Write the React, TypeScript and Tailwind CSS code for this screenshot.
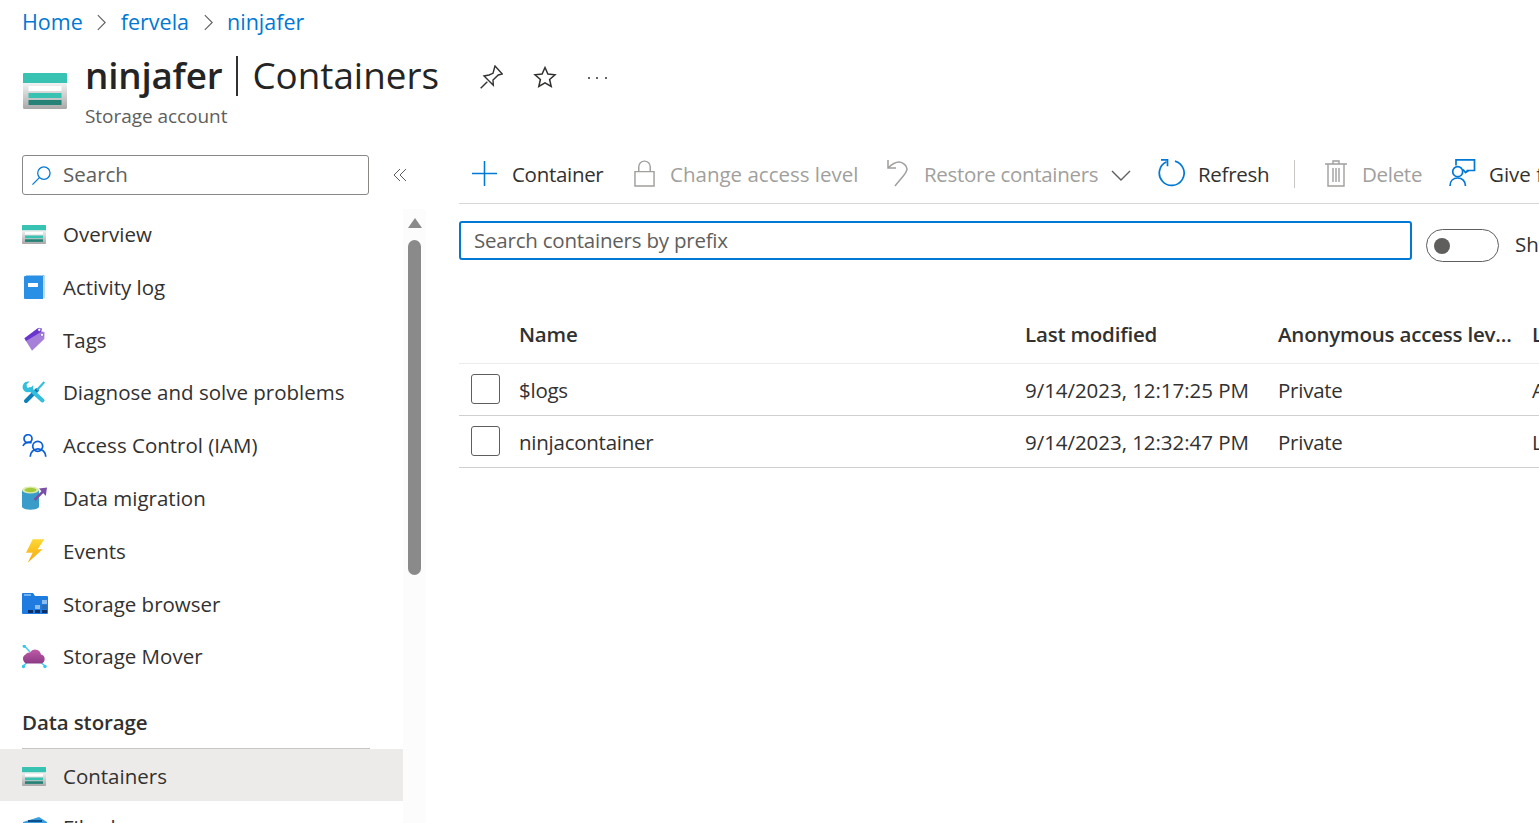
import React from 'react';

const font = 'font-["Open_Sans","Noto_Sans",sans-serif]';

const StorageIcon = ({ className }: { className: string }) => (
    <svg viewBox="0 0 44 36" className={className} preserveAspectRatio="none">
        <defs>
            <linearGradient id="storageBody" x1="0" y1="0" x2="0" y2="1">
                <stop offset="0" stopColor="#f2f2f2" />
                <stop offset="1" stopColor="#a8a8a8" />
            </linearGradient>
        </defs>
        <path d="M0 10h44v24.500a1.500 1.500 0 0 1-1.500 1.500h-41A1.500 1.500 0 0 1 0 34.500z" fill="url(#storageBody)" />
        <path d="M1 0h42a1 1 0 0 1 1 1v9H0V1a1 1 0 0 1 1-1z" fill="#37c2b1" />
        <rect x="5.500" y="13" width="33" height="5" fill="#ffffff" />
        <rect x="5.500" y="20" width="33" height="5" fill="#37c2b1" />
        <rect x="5.500" y="27" width="33" height="5" fill="#258277" />
    </svg>
);

const ActivityIcon = () => (
    <svg viewBox="0 0 23 24" className="w-[23px] h-[24px]">
        <path d="M4 .3h18v23" fill="none" stroke="#7ab8ea" strokeWidth="1" />
        <path d="M3 1h18v23H3a1 1 0 0 1-1-1V2a1 1 0 0 1 1-1z" fill="#2a90e6" />
        <rect x="6" y="8" width="10" height="4" fill="#ffffff" />
    </svg>
);

const TagsIcon = () => (
    <svg viewBox="0 0 24 25" className="w-[24px] h-[25px]">
        <path d="M3 12.500 17 4l5.500 1-.2 7L10 23.800z" fill="#a67fd8" />
        <path d="M2.300 11.200 15.700 1.200 20 1.500 19 5 4 14z" fill="#6a35cf" />
        <circle cx="17.300" cy="2.800" r="1.500" fill="#ffffff" stroke="#5c2fb5" strokeWidth="0.500" />
        <circle cx="20" cy="7.800" r="1.600" fill="#ffffff" stroke="#5c2fb5" strokeWidth="0.500" />
    </svg>
);

const DiagnoseIcon = () => (
    <svg viewBox="0 0 24 24" className="w-[24px] h-[24px]">
        <path d="M15 9 4 20" stroke="#0f7fb8" strokeWidth="4" strokeLinecap="round" />
        <path d="M15 9 22.300 1" stroke="#32bedd" strokeWidth="2" />
        <path d="M8 8 20.500 19.500" stroke="#32bedd" strokeWidth="4" strokeLinecap="round" />
        <path d="M7.500 .6 4.500 3.600l.6 3 3 .6 3-3A5.500 5.500 0 0 1 4 11 5.500 5.500 0 0 1 7.500 .6z" fill="#32bedd" />
    </svg>
);

const AccessIcon = () => (
    <svg viewBox="0 0 25 24" className="w-[25px] h-[24px]" fill="none" stroke="#0a5fd6" strokeWidth="1.700">
        <circle cx="6" cy="4.700" r="4" />
        <path d="M1 12A6 6 0 0 1 9.500 9" />
        <circle cx="15.700" cy="12.300" r="5" />
        <path d="M8.200 22.700a7.800 7.800 0 0 1 15.600 0" />
    </svg>
);

const MigrationIcon = () => (
    <svg viewBox="0 0 26 24" className="w-[26px] h-[24px]">
        <path d="M0 4v16.500c0 1.800 3.500 3.200 8.500 3.200s8.500-1.400 8.500-3.200V4z" fill="#3a9cc8" />
        <ellipse cx="8.500" cy="4" rx="8.500" ry="3.500" fill="#dcecae" />
        <ellipse cx="8.500" cy="4" rx="6" ry="2.200" fill="#a4c93a" />
        <path d="M12.500 14 21 5.500" stroke="#7a4fa8" strokeWidth="2.500" />
        <path d="M17 2.500l8-1-1.200 8.500z" fill="#7a4fa8" />
    </svg>
);

const EventsIcon = () => (
    <svg viewBox="0 0 20 25" className="w-[20px] h-[25px] ml-[3px]">
        <defs>
            <linearGradient id="boltFill" x1="0" y1="0" x2="0" y2="1">
                <stop offset="0" stopColor="#fdd835" />
                <stop offset="1" stopColor="#f5a70c" />
            </linearGradient>
        </defs>
        <path d="M7.700.3h11.600l-6.600 10h5L2.700 23.700l5-10H1z" fill="url(#boltFill)" />
    </svg>
);

const BrowserIcon = () => (
    <svg viewBox="0 0 26 21" className="w-[26px] h-[21px]">
        <path d="M0 1a1 1 0 0 1 1-1h10l2 3h12a1 1 0 0 1 1 1v16a1 1 0 0 1-1 1H1a1 1 0 0 1-1-1z" fill="#1e7be0" />
        <rect x="2" y="1" width="7" height="2" fill="#6fb4f0" />
        <path d="M6 17h5v3H6zM13 17h5v3h-5zM20 17h5v3h-5z" fill="#0d2f66" />
        <path d="M13 12h5v4h-5z" fill="#8cbcf0" />
        <path d="M20 12h5v4h-5z" fill="#2b6cb8" />
        <path d="M20 7h5v4h-5z" fill="#8cbcf0" />
    </svg>
);

const MoverIcon = () => (
    <svg viewBox="0 0 26 24" className="w-[26px] h-[24px]">
        <defs>
            <linearGradient id="cloudFill" x1="0" y1="0" x2="0" y2="1">
                <stop offset="0" stopColor="#c05aa6" />
                <stop offset="1" stopColor="#8c3a85" />
            </linearGradient>
        </defs>
        <path d="M2.500 1 8 7M1 21l6-5M23 21l-6-5" stroke="#38c8ee" strokeWidth="1.300" />
        <circle cx="2.300" cy="1.200" r="1.700" fill="#38c8ee" />
        <circle cx="1.500" cy="21.500" r="1.700" fill="#38c8ee" />
        <circle cx="23" cy="21.500" r="1.700" fill="#38c8ee" />
        <path d="M5.500 18.500A4.800 4.800 0 0 1 3.500 9.500 4.500 4.500 0 0 1 8 7.500 6 6 0 0 1 19 9.500a4.600 4.600 0 0 1 0 9z" fill="url(#cloudFill)" />
    </svg>
);

const FileSharesIcon = () => (
    <svg viewBox="0 0 26 24" className="w-[26px] h-[24px]">
        <path d="M1 6 17 1l8 5v16H1z" fill="#3a9fdc" />
        <path d="M6 5h14" stroke="#0d4f8c" strokeWidth="2" />
    </svg>
);

const navItems: { label: string; icon: React.ReactNode }[] = [
    { label: 'Overview', icon: <StorageIcon className="w-[24px] h-[19px]" /> },
    { label: 'Activity log', icon: <ActivityIcon /> },
    { label: 'Tags', icon: <TagsIcon /> },
    { label: 'Diagnose and solve problems', icon: <DiagnoseIcon /> },
    { label: 'Access Control (IAM)', icon: <AccessIcon /> },
    { label: 'Data migration', icon: <MigrationIcon /> },
    { label: 'Events', icon: <EventsIcon /> },
    { label: 'Storage browser', icon: <BrowserIcon /> },
    { label: 'Storage Mover', icon: <MoverIcon /> },
];

const NavRow = ({ label, icon, active }: { label: string; icon: React.ReactNode; active?: boolean }) => (
    <div className={`shrink-0 flex items-center pl-[22px] ${active ? 'h-[52px] pt-[2px] bg-[#edebe9]' : 'h-[52.800px]'}`}>
        <span className="w-[41px] shrink-0 flex items-center">{icon}</span>
        <span className="text-[20.500px] text-[#323130] whitespace-nowrap">{label}</span>
    </div>
);

const Chevron = () => (
    <svg viewBox="0 0 12 20" className="w-[11px] h-[19px] mx-[13.500px]" fill="none" stroke="#605e5c" strokeWidth="1.200">
        <path d="M2 2l8 8-8 8" />
    </svg>
);

const ToolbarButton = ({ icon, label, disabled, tight, width }: { icon: React.ReactNode; label: string; disabled?: boolean; tight?: boolean; width: string }) => (
    <div className={`flex items-center h-[38px] shrink-0 ${width}`}>
        <span className="flex mb-[2px]">{icon}</span>
        <span className={`text-[20.500px] whitespace-nowrap ${tight ? 'tracking-[-0.3px]' : ''} ${disabled ? 'text-[#a19f9d]' : 'text-[#323130]'}`}>{label}</span>
    </div>
);

const TableRow = ({ name, modified, access, lease }: { name: string; modified: string; access: string; lease: string }) => (
    <div className="h-[52px] pt-[2px] flex items-center border-b border-[#d0cfce] text-[20.500px] text-[#323130] whitespace-nowrap">
        <span className="w-[60px] shrink-0 pl-[12px] mb-[4px]">
            <span className="block w-[29px] h-[30px] border border-[#605e5c] rounded-[3px]" />
        </span>
        <span className="w-[506px] shrink-0 tracking-[-0.25px]">{name}</span>
        <span className="w-[253px] shrink-0 tracking-[-0.05px]">{modified}</span>
        <span className="w-[254px] shrink-0 tracking-[-0.25px]">{access}</span>
        <span>{lease}</span>
    </div>
);

export default function App() {
    return (
        <div className={`w-[1539px] h-[823px] overflow-hidden bg-white ${font}`}>
            {/* breadcrumb */}
            <div className="h-[44px] pt-[1px] flex items-center pl-[22px] text-[21.500px] text-[#0078d4]">
                <span>Home</span>
                <Chevron />
                <span>fervela</span>
                <Chevron />
                <span>ninjafer</span>
            </div>
            {/* title */}
            <div className="h-[111px] flex pl-[23px]">
                <StorageIcon className="w-[44px] h-[36px] mt-[29px] mr-[18px]" />
                <div className="flex flex-col">
                    <div className="flex items-center h-[64px] text-[36.800px] text-[#242424] whitespace-nowrap">
                        <span className="font-semibold -tracking-[0.2px]">ninjafer</span>
                        <span className="mx-[14px] w-[2px] h-[40px] bg-[#323130]" />
                        <span>Containers</span>
                        <svg viewBox="0 0 24 24" className="w-[24px] h-[24px] ml-[40px] mt-[2px]" fill="none" stroke="#323130" strokeWidth="1.400">
                            <path d="M16 1 23.300 9 19.300 10 14 15l.3 5.300L5 11l5-1 4-1.700z" />
                            <path d="M8.300 16.700 1.700 23.300" />
                        </svg>
                        <svg viewBox="0 0 24 24" className="w-[24px] h-[24px] ml-[30px] mt-[2px]" fill="none" stroke="#323130" strokeWidth="1.500">
                            <path d="M12 2.500l2.900 6.600 7.100.7-5.400 4.700 1.600 7-6.200-3.700-6.200 3.700 1.600-7L2 9.800l7.100-.7z" />
                        </svg>
                        <span className="ml-[31px] mt-[4px] w-[19px] flex justify-between">
                            <span className="w-[2px] h-[2px] bg-[#323130] rounded-full" />
                            <span className="w-[2px] h-[2px] bg-[#323130] rounded-full" />
                            <span className="w-[2px] h-[2px] bg-[#323130] rounded-full" />
                        </span>
                    </div>
                    <div className="text-[19px] text-[#605e5c] leading-[26px] -mt-[5px] tracking-[-0.05px]">Storage account</div>
                </div>
            </div>
            <div className="flex h-[668px]">
                {/* sidebar */}
                <div className="w-[403px] shrink-0">
                    <div className="flex items-center pl-[22px] h-[40px]">
                        <div className="w-[347px] h-[40px] shrink-0 border border-[#8a8886] rounded-[3px] flex items-center pl-[8px]">
                            <svg viewBox="0 0 22 22" className="w-[21px] h-[21px] mr-[11px]" fill="none" stroke="#0078d4" strokeWidth="1.300">
                                <circle cx="13.500" cy="8.500" r="6.500" />
                                <path d="M8.800 13.200 1.500 20.500" />
                            </svg>
                            <span className="text-[20.500px] text-[#605e5c] mb-[1px]">Search</span>
                        </div>
                        <svg viewBox="0 0 14 14" className="w-[14px] h-[14px] ml-[24px] shrink-0" fill="none" stroke="#605e5c" strokeWidth="1">
                            <path d="M7 1 1 7l6 6M13 1 7 7l6 6" />
                        </svg>
                    </div>
                    <div className="mt-[13px]">
                        {navItems.map((item) => (
                            <NavRow key={item.label} label={item.label} icon={item.icon} />
                        ))}
                    </div>
                    <div className="h-[65px] pl-[22px] flex items-end pb-[16px] text-[20.500px] font-semibold text-[#323130] leading-none tracking-[-0.1px]">
                        Data storage
                    </div>
                    <div className="ml-[22px] w-[348px] h-px bg-[#c8c6c4]" />
                    <NavRow label="Containers" icon={<StorageIcon className="w-[24px] h-[19px]" />} active />
                    <NavRow label="File shares" icon={<FileSharesIcon />} />
                </div>
                {/* sidebar scrollbar */}
                <div className="w-[23px] shrink-0 bg-[#fcfcfc] mt-[54px] flex flex-col items-center">
                    <span className="w-0 h-0 mt-[9px] border-x-[7px] border-x-transparent border-b-[10px] border-b-[#8a8a8a]" />
                    <span className="mt-[12px] w-[13px] h-[335px] rounded-full bg-[#8a8a8a]" />
                </div>
                {/* content */}
                <div className="ml-[33px] flex-1 min-w-0 overflow-hidden">
                    <div className="h-[49px] border-b border-[#d8d7d6] pl-[13px] flex items-start">
                        <ToolbarButton
                            width="w-[162px]"
                            label="Container"
                            tight
                            icon={
                                <svg viewBox="0 0 26 26" className="w-[25px] h-[25px] mr-[15px]" stroke="#0078d4" strokeWidth="1.600">
                                    <path d="M13 0v26M0 13h26" />
                                </svg>
                            }
                        />
                        <ToolbarButton
                            width="w-[252px]"
                            label="Change access level"
                            disabled
                            icon={
                                <svg viewBox="0 0 22 28" className="w-[21px] h-[27px] mr-[15px]" fill="none" stroke="#a19f9d" strokeWidth="1.500">
                                    <path d="M1 12h20v15H1zM5 12V7a6 6 0 0 1 12 0v5" />
                                </svg>
                            }
                        />
                        <ToolbarButton
                            width="w-[225px]"
                            label="Restore containers"
                            disabled
                            tight
                            icon={
                                <svg viewBox="0 0 23 28" className="w-[23px] h-[28px] mr-[15px]" fill="none" stroke="#a19f9d" strokeWidth="1.500">
                                    <path d="M2 1v8h8M2 9c4-4 7-6 11-6s8 4 8 7c0 4-4 7-12 17" />
                                </svg>
                            }
                        />
                        <span className="w-[47px] h-[40px] shrink-0 flex items-center">
                            <svg viewBox="0 0 20 11" className="w-[20px] h-[11px]" fill="none" stroke="#605e5c" strokeWidth="1.400">
                                <path d="M1 1l9 9 9-9" />
                            </svg>
                        </span>
                        <ToolbarButton
                            width="w-[136px]"
                            label="Refresh"
                            tight
                            icon={
                                <svg viewBox="0 0 27 28" className="w-[27px] h-[28px] mr-[13px]" fill="none" stroke="#0078d4" strokeWidth="1.700">
                                    <path d="M17 2.100A12.400 12.400 0 1 1 8.500 2.800" />
                                    <path d="M3 .8H9.500V7.300" />
                                </svg>
                            }
                        />
                        <span className="w-px h-[28px] mt-[5px] bg-[#c8c6c4] shrink-0" />
                        <ToolbarButton
                            width="w-[154px] pl-[30px]"
                            label="Delete"
                            disabled
                            tight
                            icon={
                                <svg viewBox="0 0 22 27" className="w-[22px] h-[27px] mr-[15px]" fill="none" stroke="#a19f9d" strokeWidth="1.400">
                                    <path d="M0 4h22M8 4V1h6v3M3 4v22h16V4M8 8v14M11 8v14M14 8v14" />
                                </svg>
                            }
                        />
                        <ToolbarButton
                            width="w-[200px]"
                            label="Give feedback"
                            icon={
                                <svg viewBox="0 0 28 28" className="w-[28px] h-[28px] mr-[12px]" fill="none" stroke="#0078d4" strokeWidth="1.700">
                                    <circle cx="8.700" cy="12.700" r="5" />
                                    <path d="M1 27c0-5 3.300-8 7.700-8s7.800 3 7.800 8" />
                                    <path d="M7 6.500V.9h18.500v10.600h-8" />
                                    <path d="M14 10.500l2.500 3 3-2" />
                                </svg>
                            }
                        />
                    </div>
                    <div className="mt-[17px] flex items-start">
                        <div className="w-[953px] h-[39px] border-[2.500px] border-[#0078d4] rounded-[3px] flex items-center pl-[13px] text-[20.500px] text-[#605e5c] tracking-[-0.22px] shrink-0">
                            Search containers by prefix
                        </div>
                        <div className="ml-[14px] mt-[8px] w-[73px] h-[33px] border border-[#605e5c] rounded-full flex items-center pl-[7px] shrink-0">
                            <span className="w-[16px] h-[16px] rounded-full bg-[#605e5c]" />
                        </div>
                        <span className="ml-[16px] mt-[8px] text-[20.500px] text-[#323130] whitespace-nowrap">Show deleted containers</span>
                    </div>
                    <div className="mt-[40px]">
                        <div className="h-[62px] pt-[4px] flex items-center border-b border-[#edebe9] text-[20.500px] font-semibold text-[#323130] whitespace-nowrap tracking-[-0.2px]">
                            <span className="w-[60px] shrink-0" />
                            <span className="w-[506px] shrink-0">Name</span>
                            <span className="w-[253px] shrink-0">Last modified</span>
                            <span className="w-[254px] shrink-0">Anonymous access lev...</span>
                            <span>Lease state</span>
                        </div>
                        <TableRow name="$logs" modified="9/14/2023, 12:17:25 PM" access="Private" lease="Available" />
                        <TableRow name="ninjacontainer" modified="9/14/2023, 12:32:47 PM" access="Private" lease="Leased" />
                    </div>
                </div>
            </div>
        </div>
    );
}
